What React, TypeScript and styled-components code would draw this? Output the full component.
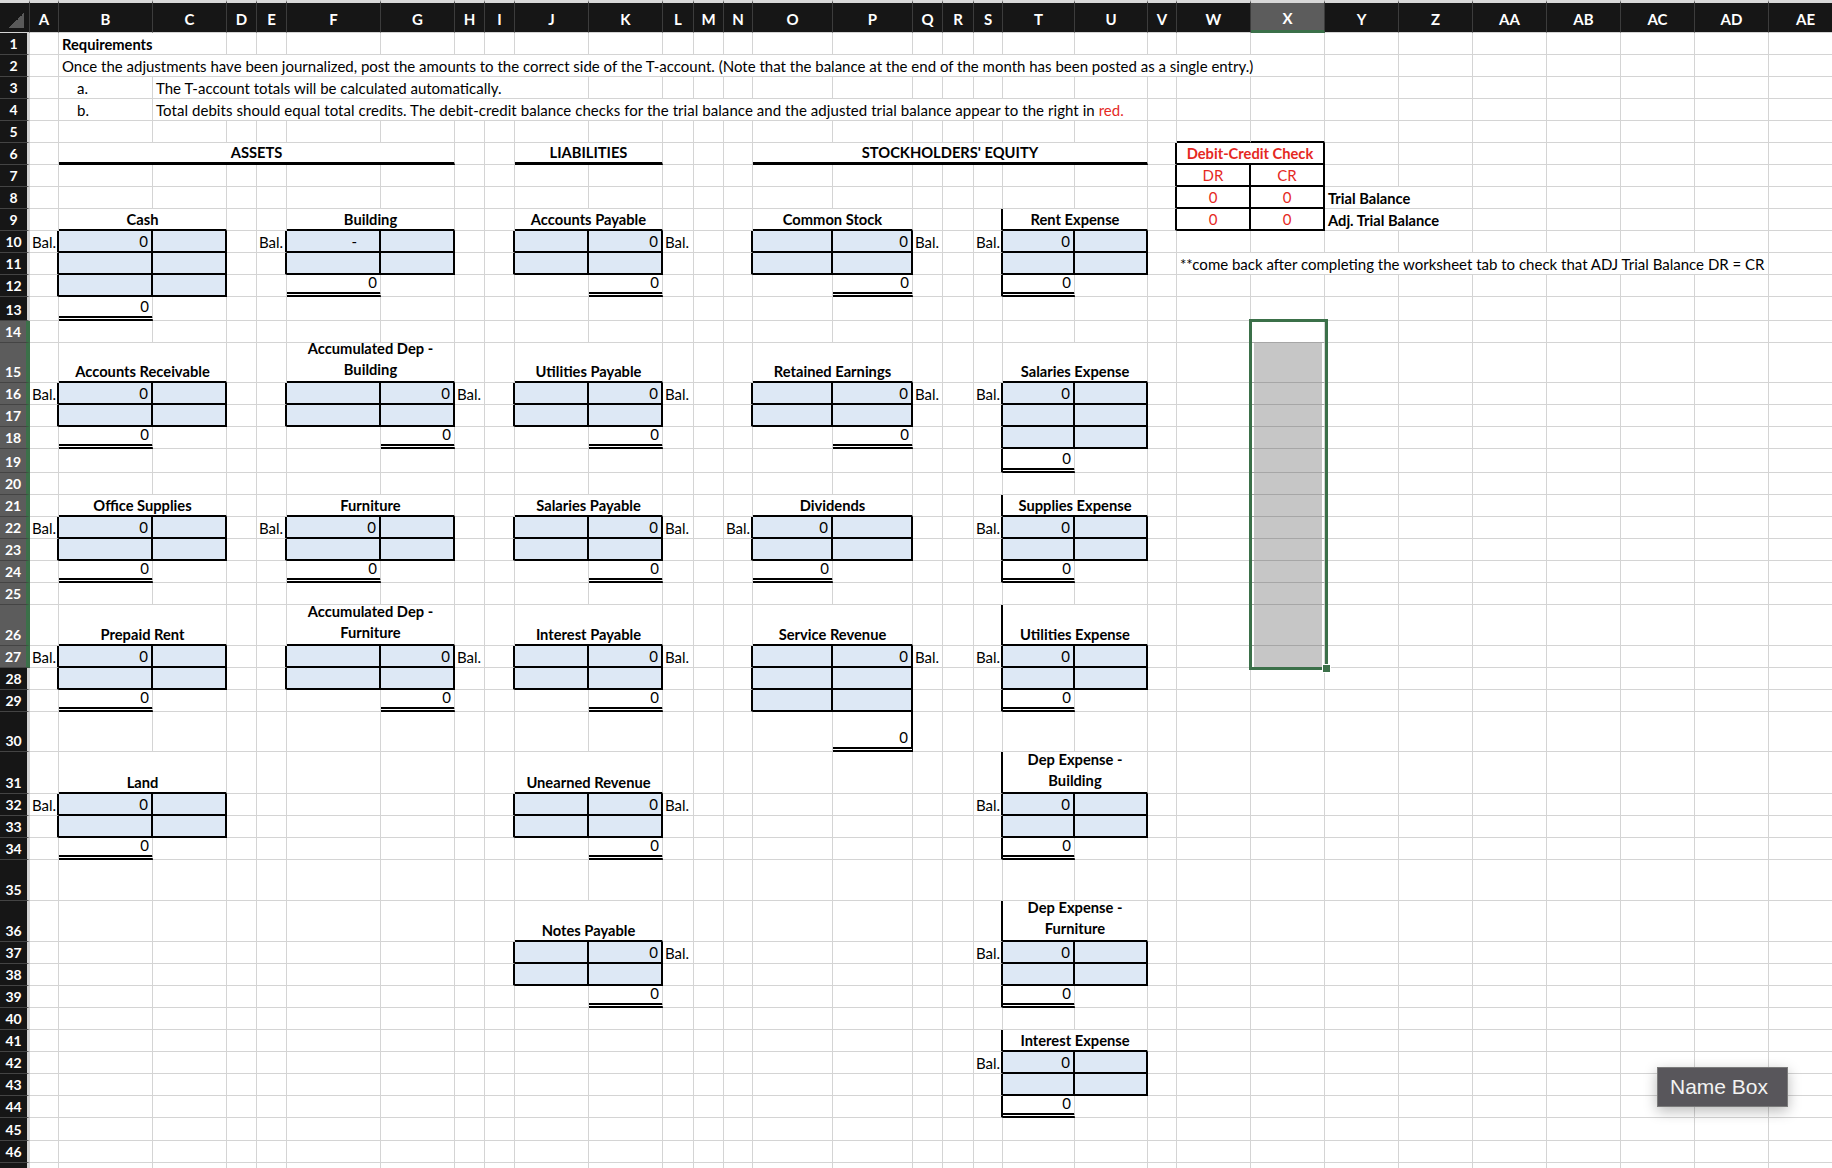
import React, { ReactNode } from "react";
import styled, { createGlobalStyle } from "styled-components";

const GRID = "#d4d4d4";
const GREEN = "#3b7049";
const RED = "#e5291f";
const BLUE = "#dde8f5";
const HEAD_BG = "#161616";
const HEAD_SEL = "#5c5c5c";

const COLS = "A B C D E F G H I J K L M N O P Q R S T U V W X Y Z AA AB AC AD AE".split(" ");
const COL_W = [29, 94, 74, 30, 30, 94, 74, 30, 30, 74, 74, 31, 30, 29, 80, 80, 30, 31, 29, 72, 73, 29, 74, 74, 74, 74, 74, 74, 74, 74, 74];
const TALL: Record<number, number> = { 13: 24, 15: 40, 19: 24, 26: 41, 30: 40, 31: 42, 35: 41, 36: 41, 45: 23 };
const ROW_COUNT = 47;
const LAST_NUMBERED = 46;
const ROW_H = Array.from({ length: ROW_COUNT }, (_, i) => TALL[i + 1] ?? 22);

// selected range X14:X27
const SEL_COL = 24;
const SEL_TOP = 14;
const SEL_BOTTOM = 27;

type Edge = "grid" | "line" | "thick" | "double" | "sel";
type Align = "left" | "center" | "right";

const EDGE: Record<Edge, string> = {
  grid: `1px solid ${GRID}`,
  line: "2px solid #000",
  thick: "3px solid #000",
  double: "5px double #000",
  sel: "1px solid #a6a6a6",
};

// ---- styles ----
const GlobalStyle = createGlobalStyle`
  html, body { margin: 0; padding: 0; background: #fff; overflow: hidden; }
  body { font-family: Lato, "Noto Sans", sans-serif; }
`;

const Page = styled.div`
  position: relative;
  width: 1832px;
  height: 1168px;
  overflow: hidden;
  background: #fff;
`;

const Sheet = styled.div`
  display: grid;
  grid-template-columns: 30px ${COL_W.map((w) => `${w}px`).join(" ")};
  grid-template-rows: 33px ${ROW_H.map((h) => `${h}px`).join(" ")};
  width: max-content;
  font-family: Lato, "Noto Sans", sans-serif;
  font-size: 15px;
  color: #000;
`;

const Corner = styled.div`
  box-sizing: border-box;
  border-top: 3px solid #d8d8d8;
  border-right: 1px solid #3c3c3c;
  border-bottom: 1px solid ${GRID};
  background: linear-gradient(to top left, #5a5a5a 50%, transparent 50%) right 5px bottom 4px / 15px 15px no-repeat,
    ${HEAD_BG};
`;

const ColHead = styled.div<{ $sel?: boolean }>`
  box-sizing: border-box;
  display: flex;
  align-items: center;
  justify-content: center;
  padding-top: 2px;
  border-top: 3px solid #d8d8d8;
  border-right: 1px solid #3c3c3c;
  border-bottom: ${(p) => (p.$sel ? `3px solid ${GREEN}` : `1px solid ${GRID}`)};
  background: ${(p) => (p.$sel ? HEAD_SEL : HEAD_BG)};
  color: #fff;
  font-weight: 700;
  font-size: 15px;
`;

const RowHead = styled.div<{ $sel?: boolean }>`
  box-sizing: border-box;
  display: flex;
  align-items: flex-end;
  justify-content: center;
  padding-bottom: 1px;
  border-right: ${(p) => (p.$sel ? `4px solid ${GREEN}` : `3px solid ${GRID}`)};
  border-bottom: 1px solid #444;
  background: ${(p) => (p.$sel ? HEAD_SEL : HEAD_BG)};
  color: #fff;
  font-weight: 700;
  font-size: 14px;
  line-height: 18px;
`;

interface CellProps {
  $align: Align;
  $bold?: boolean;
  $red?: boolean;
  $fill?: boolean;
  $sel?: boolean;
  $wrap?: boolean;
  $indent: number;
  $pr: number;
  $right: Edge;
  $bottom: Edge;
}

const Cell = styled.div<CellProps>`
  box-sizing: border-box;
  min-width: 0;
  display: flex;
  align-items: flex-end;
  justify-content: ${(p) => (p.$align === "right" ? "flex-end" : p.$align === "center" ? "center" : "flex-start")};
  text-align: ${(p) => p.$align};
  padding: 0 ${(p) => p.$pr}px 1px ${(p) => p.$indent}px;
  white-space: pre;
  line-height: ${(p) => (p.$wrap ? "21px" : "18px")};
  font-size: ${(p) => (p.$bold ? "14.7px" : "15px")};
  font-weight: ${(p) => (p.$bold ? 700 : 400)};
  color: ${(p) => (p.$red ? RED : "#000")};
  background: ${(p) =>
    p.$sel
      ? "linear-gradient(#c6c6c6, #c6c6c6) 3px 0 / calc(100% - 5px) 100% no-repeat, #fff"
      : p.$fill
      ? BLUE
      : "#fff"};
  border-right: ${(p) => EDGE[p.$right]};
  border-bottom: ${(p) => EDGE[p.$bottom]};
`;

const RedText = styled.span`
  color: ${RED};
`;

const LongText = styled.span`
  letter-spacing: 0.06px;
`;

const Selection = styled.div`
  grid-column: ${SEL_COL + 1};
  grid-row: ${SEL_TOP + 1} / ${SEL_BOTTOM + 2};
  margin: -2px -3px -2px -2px;
  border: 3px solid ${GREEN};
  position: relative;
  z-index: 2;
  pointer-events: none;

  &::after {
    content: "";
    position: absolute;
    right: -6px;
    bottom: -6px;
    width: 7px;
    height: 7px;
    background: ${GREEN};
    border: 1px solid #fff;
  }
`;

const NameTip = styled.div`
  position: absolute;
  left: 1657px;
  top: 1067px;
  width: 131px;
  height: 40px;
  box-sizing: border-box;
  display: flex;
  align-items: center;
  padding-left: 12px;
  background: #58565b;
  border: 1px solid #7b7b7b;
  color: #f2f2f2;
  font-family: "Liberation Sans", Arial, sans-serif;
  font-size: 21px;
  box-shadow: 0 4px 14px rgba(0, 0, 0, 0.28);
  z-index: 5;
`;

// ---- sheet model ----
interface Spec {
  content?: ReactNode;
  span?: number;
  align?: Align;
  bold?: boolean;
  red?: boolean;
  fill?: boolean;
  wrap?: boolean;
  indent?: number;
  pr?: number;
}

const specs = new Map<string, Spec>();
const rightEdges = new Map<string, Edge>();
const bottomEdges = new Map<string, Edge>();
const key = (r: number, c: number) => `${r}:${c}`;
const col = (letter: string) => COLS.indexOf(letter) + 1;

const put = (r: number, c: number, spec: Spec) => {
  specs.set(key(r, c), { ...specs.get(key(r, c)), ...spec });
};

const box = (r1: number, c1: number, r2: number, c2: number, fill: boolean) => {
  for (let r = r1; r <= r2; r++) {
    rightEdges.set(key(r, c1 - 1), "line");
    for (let c = c1; c <= c2; c++) {
      rightEdges.set(key(r, c), "line");
      bottomEdges.set(key(r, c), "line");
      if (fill) put(r, c, { fill: true });
    }
  }
  for (let c = c1; c <= c2; c++) bottomEdges.set(key(r1 - 1, c), "line");
};

interface Account {
  title: string;
  at: string;
  row: number;
  rows?: number;
  side: "dr" | "cr";
  dash?: boolean;
  rule?: "all" | "total";
  closeRight?: boolean;
}

const ACCOUNTS: Account[] = [
  { title: "Cash", at: "B", row: 9, rows: 3, side: "dr" },
  { title: "Building", at: "F", row: 9, side: "dr", dash: true },
  { title: "Accounts Receivable", at: "B", row: 15, side: "dr" },
  { title: "Accumulated Dep -\nBuilding", at: "F", row: 15, side: "cr" },
  { title: "Office Supplies", at: "B", row: 21, side: "dr" },
  { title: "Furniture", at: "F", row: 21, side: "dr" },
  { title: "Prepaid Rent", at: "B", row: 26, side: "dr" },
  { title: "Accumulated Dep -\nFurniture", at: "F", row: 26, side: "cr" },
  { title: "Land", at: "B", row: 31, side: "dr" },
  { title: "Accounts Payable", at: "J", row: 9, side: "cr" },
  { title: "Utilities Payable", at: "J", row: 15, side: "cr" },
  { title: "Salaries Payable", at: "J", row: 21, side: "cr" },
  { title: "Interest Payable", at: "J", row: 26, side: "cr" },
  { title: "Unearned Revenue", at: "J", row: 31, side: "cr" },
  { title: "Notes Payable", at: "J", row: 36, side: "cr" },
  { title: "Common Stock", at: "O", row: 9, side: "cr" },
  { title: "Retained Earnings", at: "O", row: 15, side: "cr" },
  { title: "Dividends", at: "O", row: 21, side: "dr" },
  { title: "Service Revenue", at: "O", row: 26, rows: 3, side: "cr", closeRight: true },
  { title: "Rent Expense", at: "T", row: 9, side: "dr", rule: "all" },
  { title: "Salaries Expense", at: "T", row: 15, rows: 3, side: "dr", rule: "total" },
  { title: "Supplies Expense", at: "T", row: 21, side: "dr", rule: "all" },
  { title: "Utilities Expense", at: "T", row: 26, side: "dr", rule: "all" },
  { title: "Dep Expense -\nBuilding", at: "T", row: 31, side: "dr", rule: "all" },
  { title: "Dep Expense -\nFurniture", at: "T", row: 36, side: "dr", rule: "all" },
  { title: "Interest Expense", at: "T", row: 41, side: "dr", rule: "all" },
];

ACCOUNTS.forEach((a) => {
  const c = col(a.at);
  const rows = a.rows ?? 2;
  const balRow = a.row + 1;
  const totalRow = a.row + rows + 1;
  put(a.row, c, { content: a.title, span: 2, align: "center", bold: true, wrap: a.title.includes("\n") });
  box(balRow, c, a.row + rows, c + 1, true);
  if (a.side === "dr") {
    put(balRow, c, a.dash ? { content: "-", align: "right", pr: 22 } : { content: "0", align: "right" });
    put(balRow, c - 1, { content: "Bal.", indent: 2 });
    put(totalRow, c, { content: "0", align: "right" });
    bottomEdges.set(key(totalRow, c), "double");
  } else {
    put(balRow, c + 1, { content: "0", align: "right" });
    put(balRow, c + 2, { content: "Bal.", indent: 2 });
    put(totalRow, c + 1, { content: "0", align: "right" });
    bottomEdges.set(key(totalRow, c + 1), "double");
    if (a.closeRight) rightEdges.set(key(totalRow, c + 1), "line");
  }
  if (a.rule) {
    rightEdges.set(key(totalRow, c - 1), "line");
    if (a.rule === "all") rightEdges.set(key(a.row, c - 1), "line");
  }
});

// requirements text
put(1, col("B"), { content: "Requirements", span: 2, bold: true });
put(2, col("B"), {
  content:
    "Once the adjustments have been journalized, post the amounts to the correct side of the T-account. (Note that the balance at the end of the month has been posted as a single entry.)",
  span: 23,
});
put(3, col("B"), { content: "a.", indent: 18 });
put(3, col("C"), { content: "The T-account totals will be calculated automatically.", span: 8 });
put(4, col("B"), { content: "b.", indent: 18 });
put(4, col("C"), {
  content: (
    <LongText>
      Total debits should equal total credits. The debit-credit balance checks for the trial balance and the adjusted
      trial balance appear to the right in <RedText>red.</RedText>
    </LongText>
  ),
  span: 19,
});

// section headings
[
  { text: "ASSETS", at: "B", span: 6 },
  { text: "LIABILITIES", at: "J", span: 2 },
  { text: "STOCKHOLDERS' EQUITY", at: "O", span: 7 },
].forEach((h) => {
  put(6, col(h.at), { content: h.text, span: h.span, align: "center", bold: true });
  bottomEdges.set(key(6, col(h.at)), "thick");
});

// debit-credit check
box(6, col("W"), 9, col("X"), false);
put(6, col("W"), { content: "Debit-Credit Check", span: 2, align: "center", bold: true, red: true });
put(7, col("W"), { content: "DR", align: "center", red: true });
put(7, col("X"), { content: "CR", align: "center", red: true });
[8, 9].forEach((r) => {
  put(r, col("W"), { content: "0", align: "center", red: true });
  put(r, col("X"), { content: "0", align: "center", red: true });
});
put(8, col("Y"), { content: "Trial Balance", span: 2, bold: true });
put(9, col("Y"), { content: "Adj. Trial Balance", span: 2, bold: true });
put(11, col("W"), {
  content: "**come back after completing the worksheet tab to check that ADJ Trial Balance DR = CR",
  span: 8,
});

function buildCells() {
  const out: React.ReactElement[] = [];
  for (let r = 1; r <= ROW_COUNT; r++) {
    let c = 1;
    while (c <= COLS.length) {
      const s = specs.get(key(r, c)) ?? {};
      const span = s.span ?? 1;
      const sel = c === SEL_COL && r > SEL_TOP && r <= SEL_BOTTOM;
      const selEdge = c === SEL_COL && r >= SEL_TOP && r < SEL_BOTTOM;
      out.push(
        <Cell
          key={key(r, c)}
          style={{ gridRow: r + 1, gridColumn: `${c + 1} / span ${span}` }}
          $align={s.align ?? "left"}
          $bold={s.bold}
          $red={s.red}
          $fill={s.fill}
          $wrap={s.wrap}
          $sel={sel}
          $indent={s.indent ?? 3}
          $pr={s.pr ?? 3}
          $right={rightEdges.get(key(r, c + span - 1)) ?? "grid"}
          $bottom={selEdge ? "sel" : bottomEdges.get(key(r, c)) ?? "grid"}
        >
          {s.content}
        </Cell>
      );
      c += span;
    }
  }
  return out;
}

export default function App() {
  return (
    <Page>
      <GlobalStyle />
      <Sheet>
        <Corner style={{ gridRow: 1, gridColumn: 1 }} />
        {COLS.map((l, i) => (
          <ColHead key={l} style={{ gridRow: 1, gridColumn: i + 2 }} $sel={i + 1 === SEL_COL}>
            {l}
          </ColHead>
        ))}
        {ROW_H.map((_, i) => (
          <RowHead key={i} style={{ gridRow: i + 2, gridColumn: 1 }} $sel={i + 1 >= SEL_TOP && i + 1 <= SEL_BOTTOM}>
            {i + 1 <= LAST_NUMBERED ? i + 1 : null}
          </RowHead>
        ))}
        {buildCells()}
        <Selection />
      </Sheet>
      <NameTip>Name Box</NameTip>
    </Page>
  );
}
